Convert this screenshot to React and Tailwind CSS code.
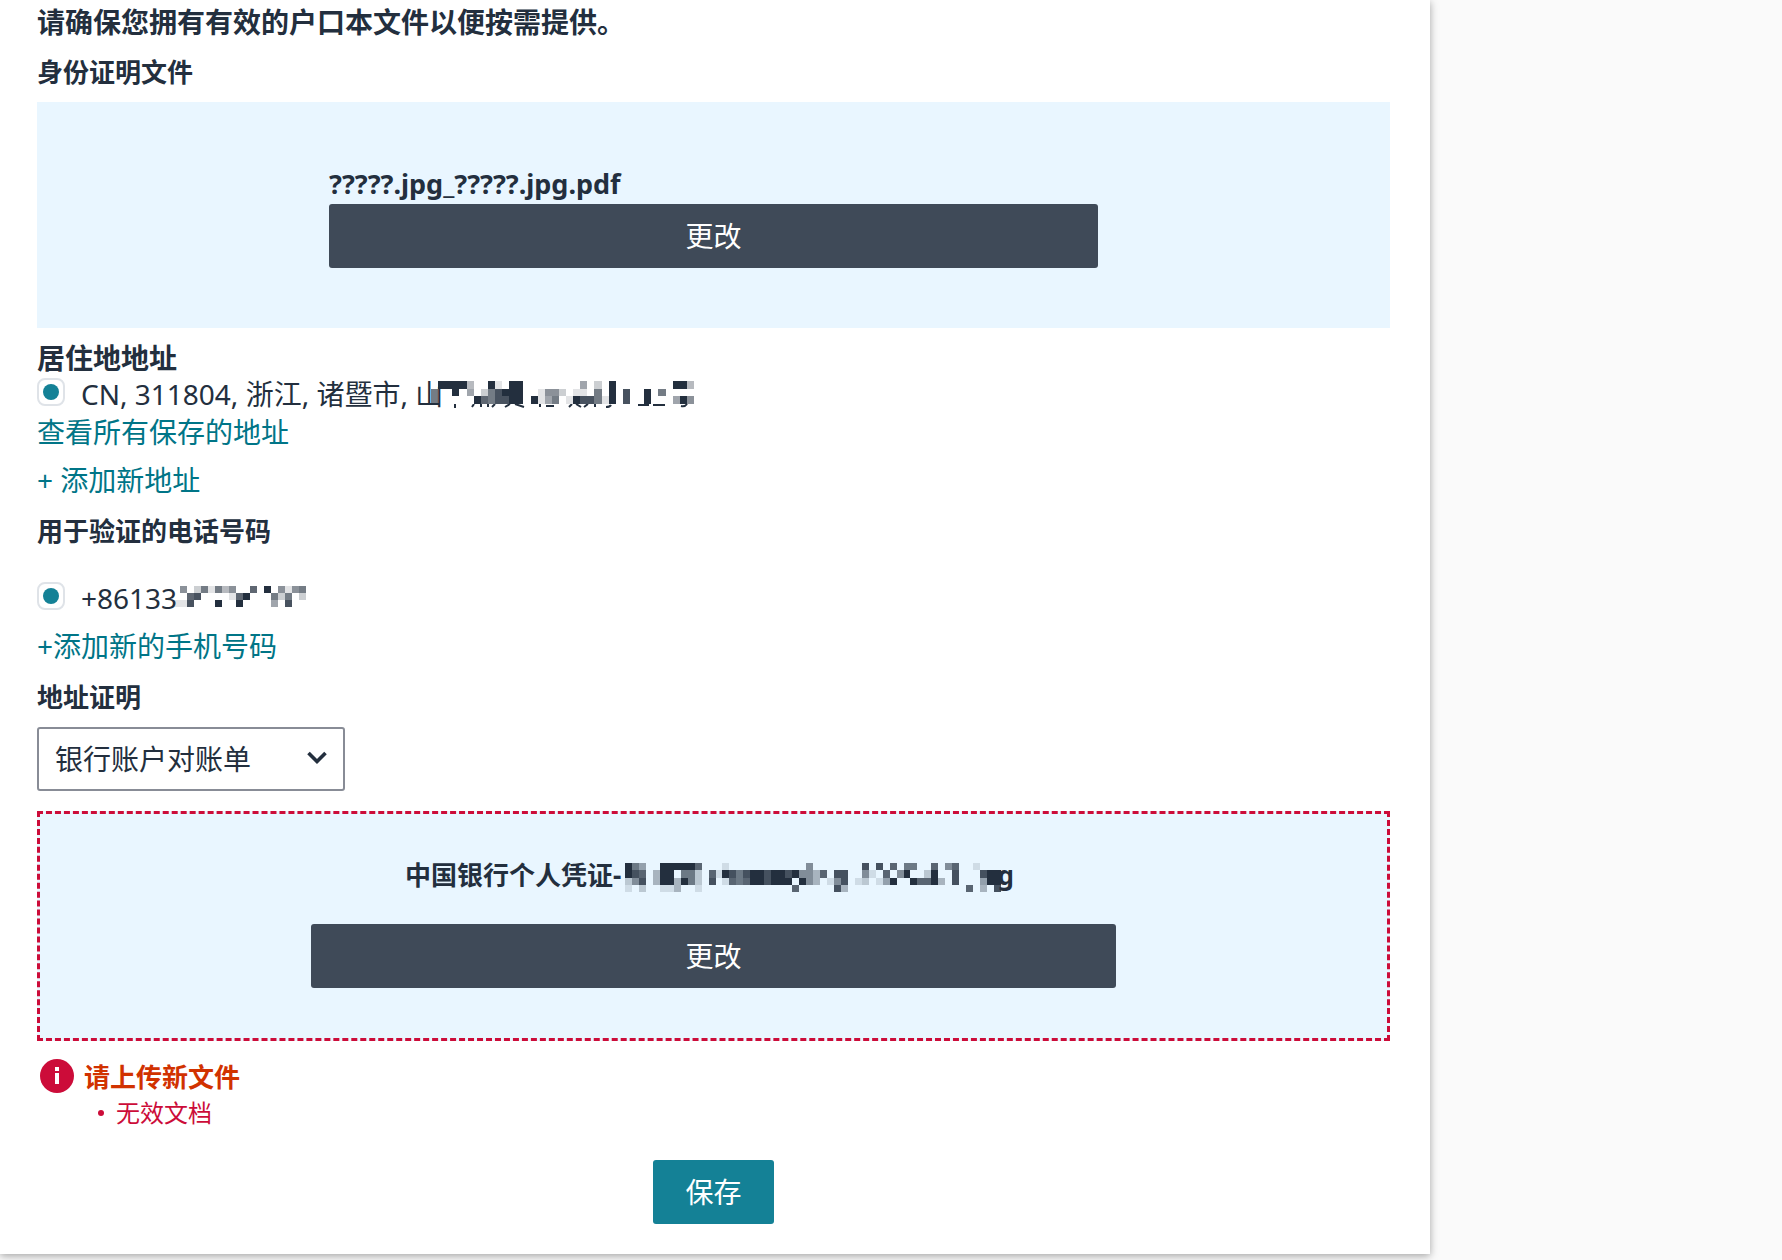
import React, { useState } from 'react';

// Each digit is the strength of one block, a dot leaves it empty
const ADDRESS_MASK = [
  '.99993..91.99........4.2.9........993',
  '6..9.4.268999..1552.11.6.9.8..9.6....',
  '6.....9768899.9146.1988619.8..9...495',
];

const PHONE_MASK = [
  '.5.261635..7.9.5156',
  '..78....179...626.2',
  '118...9..9....4.8..',
];

const FILE_MASK = [
  '964..999997...1...........5.......8.8.7.66..7.57..1...',
  '987.399.662.71986899899895537.88..51.7.59..29..8...899',
  '258.3993962.8.1767998999.953.158.12.149..97793.8...499',
  '1.2..113..1.............7.....83.................7.3.8',
];

function Mask({ rows, className }) {
  const cols = rows[0].length;

  return (
    <svg
      className={className}
      viewBox={`0 0 ${cols} ${rows.length}`}
      preserveAspectRatio="none"
      shapeRendering="crispEdges"
      fill="#232f3e"
      aria-hidden="true"
    >
      {rows.map((row, y) =>
        row.split('').map((c, x) =>
          c === '.' ? null : (
            <rect key={`${x}-${y}`} x={x} y={y} width="1" height="1" opacity={c === '9' ? 1 : Number(c) / 10 + 0.03} />
          )
        )
      )}
    </svg>
  );
}

function Radio({ id, name }) {
  return (
    <input
      id={id}
      name={name}
      type="radio"
      defaultChecked
      className="mb-1 grid size-7 shrink-0 appearance-none place-content-center rounded-lg border-2 border-[#dfe3e8] bg-white before:size-4 before:rounded-full before:bg-[#148196] before:content-['']"
    />
  );
}

function ChangeButton() {
  return (
    <button type="button" className="h-16 w-full rounded-[3px] bg-[#3f4a58] text-white">
      更改
    </button>
  );
}

export default function App() {
  const [proof, setProof] = useState('bank');

  return (
    <div className="min-h-screen bg-[#fafafa] pr-[352px] font-['Noto_Sans','Noto_Sans_CJK_SC',sans-serif] text-[28px] leading-9 text-[#232f3e]">
      <main className="bg-white pt-1 pr-10 pb-[30px] pl-[37px] shadow-[0_2px_8px_rgba(0,0,0,0.35)]">
        <p className="font-bold">请确保您拥有有效的户口本文件以便按需提供。</p>

        <h2 className="mt-[14px] text-[26px] font-bold">身份证明文件</h2>
        <section className="mt-3 bg-[#e9f6ff] px-[292px] pt-16 pb-[60px]">
          <p className="mb-[2px] text-[27px] font-bold">?????.jpg_?????.jpg.pdf</p>
          <ChangeButton />
        </section>

        <h2 className="mt-3 font-bold">居住地地址</h2>
        <div className="flex items-center gap-4">
          <Radio id="address" name="address" />
          <label htmlFor="address" className="flex items-center">
            CN, 311804, 浙江, 诸暨市, 山
            <span className="-ml-3 flex flex-col">
              <Mask rows={ADDRESS_MASK} className="h-[23px] w-[263px]" />
              {/* strokes left showing under the blocks */}
              <svg className="h-1 w-[263px]" viewBox="0 0 263 4" fill="none" stroke="#232f3e" strokeWidth="2" aria-hidden="true">
                <path d="M24 0v4M43 0l-2 3M50 0v3M57 0v3M64 0l-3 3M74 3l5-3M84 0l9 3M109 0v3M115 2h8M138 3l3-3M145 0l5 3M153 3l4-3M164 0v3M180 1q-1 2-5 2M207 1h11M222 1h12M256 0q-2 3-6 2" />
              </svg>
            </span>
          </label>
        </div>
        <div className="mt-[2px]">
          <a href="#addresses" className="text-[#007587]">查看所有保存的地址</a>
        </div>
        <div className="mt-3">
          <a href="#new-address" className="text-[#007587]">+ 添加新地址</a>
        </div>

        <h2 className="mt-[15px] text-[26px] font-bold">用于验证的电话号码</h2>
        <div className="mt-[31px] flex items-center gap-4">
          <Radio id="phone" name="phone" />
          <label htmlFor="phone" className="flex items-center">
            +86133
            <Mask rows={PHONE_MASK} className="-ml-1 mb-1 h-[21px] w-[133px]" />
          </label>
        </div>
        <div className="mt-3">
          <a href="#new-phone" className="text-[#007587]">+添加新的手机号码</a>
        </div>

        <h2 className="mt-[15px] text-[26px] font-bold">
          <label htmlFor="proof">地址证明</label>
        </h2>
        <div className="relative mt-3 w-[308px]">
          <select
            id="proof"
            value={proof}
            onChange={e => setProof(e.target.value)}
            className="h-16 w-full appearance-none rounded-[3px] border-2 border-[#888c96] bg-white pl-4"
          >
            <option value="bank">银行账户对账单</option>
          </select>
          <svg className="pointer-events-none absolute top-6 right-[18px] h-3.5 w-5" viewBox="0 0 20 14" fill="none" stroke="#232f3e" strokeWidth="3.6" aria-hidden="true">
            <path d="M1.5 2 10 10.5 18.5 2" />
          </svg>
        </div>

        <section className="mt-5 border-3 border-dashed border-[#cc0c39] bg-[#e9f6ff] px-[271px] pt-[43px] pb-[50px]">
          <p className="mb-[31px] flex items-center justify-center pr-2 text-[26px] font-bold">
            中国银行个人凭证-
            <Mask rows={FILE_MASK} className="-mr-1 ml-1 mt-1 h-[29px] w-[376px]" />
            g
          </p>
          <ChangeButton />
        </section>

        <div className="mt-[18px] flex gap-[10px] pl-[3px]" role="alert">
          <svg className="size-[34px] shrink-0" viewBox="0 0 34 34" aria-hidden="true">
            <circle cx="17" cy="17" r="17" fill="#cc0c39" />
            <path d="M15 8h4v4h-4zM15 14h4v11h-4z" fill="#fff" />
          </svg>
          <div>
            <p className="text-[26px] font-bold text-[#d13200]">请上传新文件</p>
            <ul className="text-2xl leading-9 text-[#cc0c39]">
              <li className="flex items-center gap-3 pl-[14px]">
                <span className="size-1.5 rounded-full bg-[#cc0c39]" />
                无效文档
              </li>
            </ul>
          </div>
        </div>

        <div className="mt-[29px] flex justify-center">
          <button type="button" className="h-16 rounded-[3px] bg-[#148196] px-8 text-white">保存</button>
        </div>
      </main>
    </div>
  );
}
